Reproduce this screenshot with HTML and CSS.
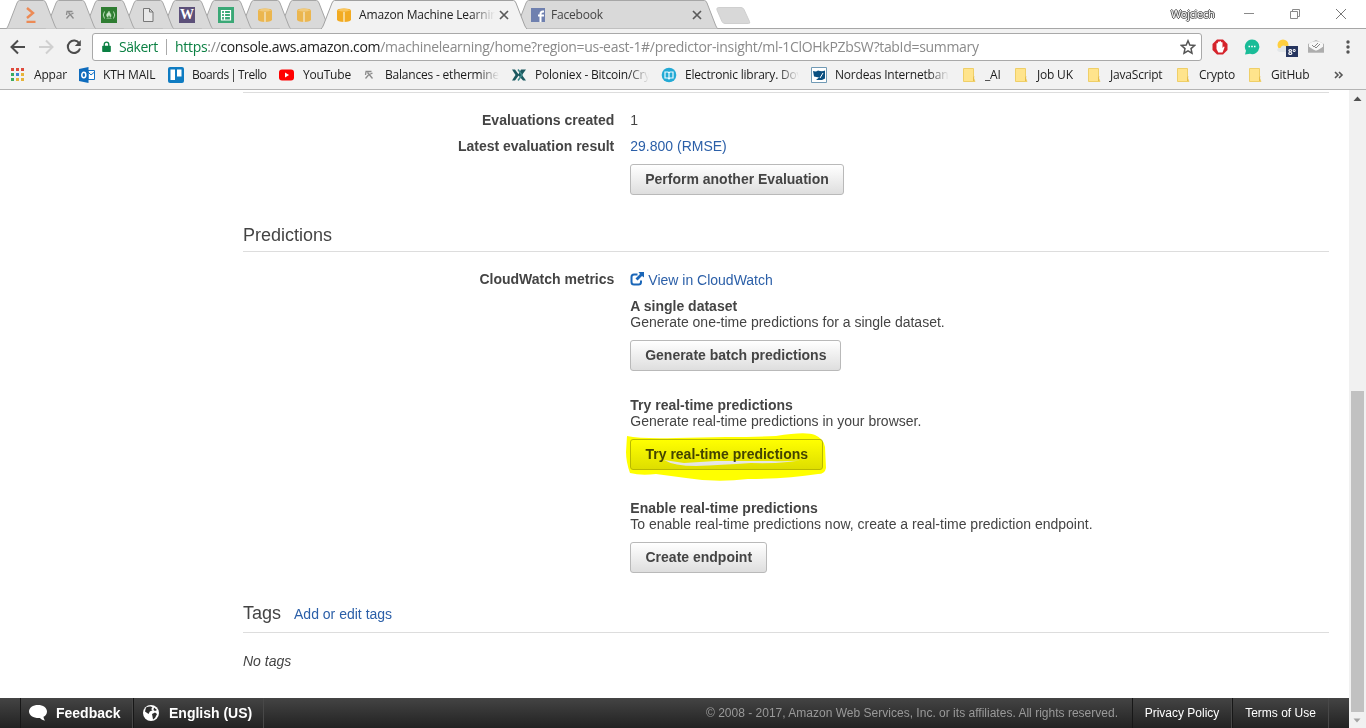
FILE: index.html
```html
<!DOCTYPE html>
<html lang="en">
<head>
<meta charset="utf-8">
<title>Amazon Machine Learning</title>
<link rel="stylesheet" href="styles.css">
</head>
<body>
<svg width="0" height="0" class="defs">
  <defs>
    <symbol id="tab" viewBox="0 0 51 29"><path d="M.5 28.500Q1.500 27.500 2.500 25L11 3Q12 .5 13.500 .5H37.500Q39 .5 40 3L48.500 25Q49.500 27.500 50.500 28.500" fill="#d9d9d9" stroke="#a6a6a6"/></symbol>
    <symbol id="cube" viewBox="0 0 16 16"><path d="M1 3.500Q1 1.500 8 1.500T15 3.500V12.500Q15 14.500 8 15Q1 14.500 1 12.500z" fill="#f2ab22"/><path d="M1.500 3.500Q4 1.500 8 1.500T14.500 3.500Q8 5.800 1.500 3.500z" fill="#f9c55c"/><path d="M7 5h2v10H7z" fill="#f9d78f"/></symbol>
    <symbol id="pick" viewBox="0 0 16 16"><path d="M4.500 4.500h6M5 4.500l-.5 3.500M6.500 5.500l5 6M7.500 8l-3 3.500M8.500 7.500l3-1.500" fill="none" stroke="#8b8b8b" stroke-width="1.300"/></symbol>
    <symbol id="folder" viewBox="0 0 16 16"><path d="M2.500 1.500h10v9.500l1.500 3.500H2.500z" fill="#ffe48c" stroke="#efcf68"/><path d="M12.500 14v-3l.5-1.500" fill="none" stroke="#e6bd4a"/></symbol>
    <symbol id="close" viewBox="0 0 10 10"><path d="M1 1l8 8M9 1L1 9" stroke="#5a5a5a" stroke-width="1.700"/></symbol>
  </defs>
</svg>
<div class="window">
  <header class="titlebar">
    <div class="tabs">
      <div class="tab"><svg class="shape"><use href="#tab"/></svg><svg class="fav dim" viewBox="0 0 16 16"><path d="M4 1l6 5-6 5M3.500 15h9" fill="none" stroke="#f3702a" stroke-width="2.400"/></svg></div>
      <div class="tab"><svg class="shape"><use href="#tab"/></svg><svg class="fav"><use href="#pick"/></svg></div>
      <div class="tab"><svg class="shape"><use href="#tab"/></svg><svg class="fav" viewBox="0 0 16 16"><path d="M0 0h16v16H0z" fill="#2f7d32"/><path d="M3.500 4.500q-2.500 3.500 0 7M12.500 4.500q2.500 3.500 0 7" fill="none" stroke="#b9dcb9"/><path d="M5.500 11.500h5M8 4c.3 2 2.500 3 2 5-.2 1-1 1.500-1 1.500.2-1.500-.8-1.500-1-2.500-.5 1-1.200 1.500-.8 2.500-2-.8-2-3-1-4C7.200 5.500 7.800 5 8 4z" fill="#c8e4c8" stroke="#b9dcb9" stroke-width=".5"/></svg></div>
      <div class="tab"><svg class="shape"><use href="#tab"/></svg><svg class="fav" viewBox="0 0 16 16"><path d="M3.500 1.500h6l3.500 3.500v9.500H3.500zM9.500 1.500V5H13" fill="#e8e8e8" stroke="#777"/></svg></div>
      <div class="tab"><svg class="shape"><use href="#tab"/></svg><span class="fav letter-w">W</span></div>
      <div class="tab"><svg class="shape"><use href="#tab"/></svg><svg class="fav" viewBox="0 0 16 16"><path d="M0 0h16v16H0z" fill="#3aa876"/><path d="M3.500 3.500h9v9.500h-9zM3.500 6.500h9M3.500 9.500h9M6.500 3.500v9.500" fill="none" stroke="#fff" stroke-width="1.200"/></svg></div>
      <div class="tab"><svg class="shape"><use href="#tab"/></svg><svg class="fav dim"><use href="#cube"/></svg></div>
      <div class="tab"><svg class="shape"><use href="#tab"/></svg><svg class="fav dim"><use href="#cube"/></svg></div>
      <div class="tab wide active">
        <svg class="shape" viewBox="0 0 206 29"><path d="M0 29Q1.500 27.500 2.500 25L11 3Q12 .5 13.500 .5H192.500Q194 .5 195 3L203.500 25Q204.500 27.500 206 29" fill="#f2f2f2" stroke="#a0a0a0"/></svg>
        <svg class="fav"><use href="#cube"/></svg><span class="tab-title fade">Amazon Machine Learnin</span><svg class="close"><use href="#close"/></svg>
      </div>
      <div class="tab wide facebook">
        <svg class="shape" viewBox="0 0 203 29"><path d="M.5 28.500Q1.500 27.500 2.500 25L11 3Q12 .5 13.500 .5H189.500Q191 .5 192 3L200.500 25Q201.500 27.500 202.500 28.500" fill="#d9d9d9" stroke="#a6a6a6"/></svg>
        <svg class="fav" viewBox="0 0 16 16"><path d="M1 1h14v14H1z" fill="#6f80af"/><path d="M10.500 15V7Q10.500 4.500 13 4.500H14M8 8.500h6" fill="none" stroke="#fff" stroke-width="2"/></svg><span class="tab-title">Facebook</span><svg class="close"><use href="#close"/></svg>
      </div>
      <svg class="newtab" viewBox="0 0 36 18"><path d="M3 .5H25q2 0 3 2l5.500 12q1 2-1 2H9q-2 0-3-2L1 3Q0 .5 3 .5z" fill="#d8d8d8" stroke="#cfcfcf"/></svg>
    </div>
    <div class="controls">
      <span class="user">Wojciech</span>
      <svg class="ctl minimize" viewBox="0 0 12 12"><path d="M1 5.500h10" stroke="#8a8a8a"/></svg>
      <svg class="ctl restore" viewBox="0 0 12 12"><path d="M1.500 3.500h7v7h-7zM3.500 3V1.500h7v7H9" fill="none" stroke="#8a8a8a"/></svg>
      <svg class="ctl" viewBox="0 0 12 12"><path d="M1 1l10 10M11 1L1 11" stroke="#777"/></svg>
    </div>
  </header>

  <div class="toolbar">
    <svg class="nav" viewBox="0 0 16 16"><path d="M15 8H2M8 1.500L1.500 8 8 14.500" fill="none" stroke="#4c4c4c" stroke-width="2"/></svg>
    <svg class="nav" viewBox="0 0 16 16"><path d="M1 8h13M8 1.500L14.500 8 8 14.500" fill="none" stroke="#d0d0d0" stroke-width="2"/></svg>
    <svg class="nav" viewBox="0 0 16 16"><path d="M13.300 4.500A6.200 6.200 0 1 0 14 9.500" fill="none" stroke="#4c4c4c" stroke-width="2"/><path d="M14.800 1v6h-6z" fill="#4c4c4c"/></svg>
    <div class="omnibox">
      <svg class="lock" viewBox="0 0 10 13"><path d="M1 5h8q.8 0 .8.800v5.400q0 .8-.8.800H1q-.8 0-.8-.8V5.800Q.2 5 1 5z" fill="#0b8043"/><path d="M2.500 6V3.500a2.500 2.500 0 0 1 5 0V6" fill="none" stroke="#0b8043" stroke-width="1.500"/></svg>
      <span class="secure">Säkert</span>
      <span class="url"><span class="scheme">https</span>://<span class="host">console.aws.amazon.com</span>/machinelearning/home?region=us-east-1#/predictor-insight/ml-1ClOHkPZbSW?tabId=summary</span>
      <svg class="star" viewBox="0 0 16 16"><path d="M8 1.800l1.800 4.300 4.700.4-3.500 3.100 1 4.600L8 11.800l-4 2.400 1-4.600L1.500 6.500l4.700-.4z" fill="none" stroke="#555" stroke-width="1.500"/></svg>
    </div>
    <div class="extensions">
      <svg viewBox="0 0 16 16"><path d="M5 .5h6L15.500 5v6L11 15.500H5L.5 11V5z" fill="#d5232b"/><path d="M4.500 8V4.500q.7-1 1.400 0V3q.7-1 1.500 0v-.4q.8-1 1.600 0v.8q.8-.8 1.500 0V9l1.200-1.500q1.200 0 .7 1.200L10.500 13.500H6.300L4.500 10z" fill="#fff"/></svg>
      <svg viewBox="0 0 16 16"><path d="M8 .5a7.300 7.300 0 1 1-2 14.300L1 15.500l1-3.800A7.300 7.300 0 0 1 8 .5z" fill="#1abc98"/><path d="M4.500 7.500h1.500M7.200 7.500h1.600M10 7.500h1.500" stroke="#fff" stroke-width="1.300"/></svg>
      <span class="weather"><svg viewBox="0 0 16 16"><circle cx="7" cy="6" r="5.500" fill="#ffcf3f"/><path d="M3.500 13q-3-1-2-3 1-1.500 3-1 1.500-3.500 5-2 2 1 2 2.500 3 0 3 3.500z" fill="#e3e7e9"/></svg><span class="temp">8°</span></span>
      <svg viewBox="0 0 16 16"><path d="M0 5l8-4 8 4v8.500H0z" fill="#b2b2b2"/><path d="M1 4.500q7-4.500 14 0V8l-7 4-7-4z" fill="#f7f7f7"/><path d="M4 6l2 2 4-4M7 8l1 1 4-4" fill="none" stroke="#888"/><path d="M0 13.500V7l5 4q3 1.500 6 0l5-4v6.500z" fill="#adadad"/></svg>
      <svg class="menu" viewBox="0 0 16 16"><circle cx="8" cy="3" r="1.700"/><circle cx="8" cy="8" r="1.700"/><circle cx="8" cy="13" r="1.700"/></svg>
    </div>
  </div>

  <nav class="bookmarks">
    <a class="bm"><svg viewBox="0 0 16 16"><path d="M1 1h3v3H1zM6 1h3v3H6zM11 1h3v3h-3z" fill="#df4a3c"/><path d="M1 6h3v3H1z" fill="#3cab61"/><path d="M6 6h3v3H6z" fill="#4285d6"/><path d="M11 6h3v3h-3z" fill="#e7b43a"/><path d="M1 11h3v3H1z" fill="#3cab61"/><path d="M6 11h3v3H6zM11 11h3v3h-3z" fill="#e7b43a"/></svg><span>Appar</span></a>
    <a class="bm"><svg viewBox="0 0 16 16"><path d="M9 3.500h6.500v9H9zM9 5l3 3 3.500-3" fill="#fff" stroke="#1472c4"/><path d="M0 2l9.500-2v16L0 14z" fill="#0f6cbd"/><ellipse cx="4.800" cy="8" rx="2" ry="2.700" fill="none" stroke="#fff" stroke-width="1.500"/></svg><span>KTH MAIL</span></a>
    <a class="bm trello"><svg viewBox="0 0 16 16"><rect width="16" height="16" rx="2" fill="#0f7cc2"/><path d="M2.500 2.500h4.500v10.500H2.500zM9 2.500h4.500v7H9z" fill="#fff"/></svg><span>Boards | Trello</span></a>
    <a class="bm"><svg viewBox="0 0 16 16"><rect x="0" y="2.500" width="15" height="11" rx="3" fill="#f00"/><path d="M6 5.500v5L10 8z" fill="#fff"/></svg><span>YouTube</span></a>
    <a class="bm"><svg><use href="#pick"/></svg><span class="fade">Balances - ethermine</span></a>
    <a class="bm"><svg viewBox="0 0 16 16"><path d="M1 2.500h3L8 8l-4 5.500H1L4.500 8zM10 2.500h5L11 8l4 5.500h-3L7 8z" fill="#1c5960"/><path d="M7 2.500L11 8l-4 5.500" fill="none" stroke="#3f898b" stroke-width="1.500"/></svg><span class="fade">Poloniex - Bitcoin/Cry</span></a>
    <a class="bm"><svg viewBox="0 0 16 16"><circle cx="8" cy="8" r="7.300" fill="#23aad5"/><path d="M4 5h3l1 1 1-1h3v6H9l-1 1-1-1H4zM8 6v5" fill="none" stroke="#eefaff" stroke-width="1.200"/></svg><span class="fade">Electronic library. Dov</span></a>
    <a class="bm"><svg viewBox="0 0 16 16"><path d="M.5.5h15v15H.5z" fill="#fff" stroke="#719ab5"/><path d="M2 4q3 1 5-.5 4 1.500 7 0v8l-3 1.500H5l3-2.500-5-1z" fill="#0a4f80"/><path d="M9 11l3-5" stroke="#fff"/></svg><span class="fade">Nordeas Internetbank</span></a>
    <a class="bm"><svg><use href="#folder"/></svg><span>_AI</span></a>
    <a class="bm"><svg><use href="#folder"/></svg><span>Job UK</span></a>
    <a class="bm"><svg><use href="#folder"/></svg><span>JavaScript</span></a>
    <a class="bm"><svg><use href="#folder"/></svg><span>Crypto</span></a>
    <a class="bm"><svg><use href="#folder"/></svg><span>GitHub</span></a>
    <svg class="more" viewBox="0 0 10 8"><path d="M1 1l3 3-3 3M5 1l3 3-3 3" fill="none" stroke="#555" stroke-width="1.600"/></svg>
  </nav>

  <div class="viewport">
    <div class="page">
      <main class="content">
        <section class="evaluations">
          <div class="row"><div class="label">Evaluations created</div><div class="value">1</div></div>
          <div class="row"><div class="label">Latest evaluation result</div><div class="value"><a class="link">29.800 (RMSE)</a></div></div>
          <div class="row"><div class="value solo"><button class="btn perform">Perform another Evaluation</button></div></div>
        </section>
        <h2 class="heading">Predictions</h2>
        <section class="predictions">
          <div class="row">
            <div class="label">CloudWatch metrics</div>
            <div class="value">
              <a class="link cloud"><svg viewBox="0 0 14 14"><path d="M7.500 2.500H4Q1.500 2.500 1.500 5v5q0 2.500 2.500 2.500H8.500q2.500 0 2.500-2.500V8.500" fill="none" stroke="#1a66b8" stroke-width="2"/><path d="M8.500 0H14v5.500l-2-1.500-4.500 4.500-2-2L10 2z" fill="#1a66b8"/></svg>View in CloudWatch</a>
              <div class="action">
                <strong>A single dataset</strong><p>Generate one-time predictions for a single dataset.</p>
                <button class="btn batch">Generate batch predictions</button>
              </div>
              <div class="action second">
                <strong>Try real-time predictions</strong><p>Generate real-time predictions in your browser.</p>
                <div class="marked"><button class="btn">Try real-time predictions</button>
                  <svg class="marker" viewBox="0 0 202 50"><path fill-rule="evenodd" d="M1 4Q15 7 50 6L100 5Q130 5 150 4Q180-1 189 3Q198 7 199 15L200 36Q199 42 192 42Q160 47 122 47Q90 51 60 46L30 42Q15 44 4 41Q0 30 0 20zM38 28L58 31 90 29 145 29Q170 30 182 27Q160 32 125 31Q95 33 70 34Q48 34 38 28z" fill="#ff0"/></svg>
                </div>
              </div>
              <div class="action third">
                <strong>Enable real-time predictions</strong><p>To enable real-time predictions now, create a real-time prediction endpoint.</p>
                <button class="btn endpoint">Create endpoint</button>
              </div>
            </div>
          </div>
        </section>
        <div class="tags-head"><h2>Tags</h2><a class="link">Add or edit tags</a></div>
        <p class="no-tags">No tags</p>
      </main>
      <footer class="footer">
        <a class="foot feedback"><svg viewBox="0 0 18 16"><path d="M9 0c5 0 9 2.700 9 6.500 0 2.600-1.500 4.300-3.500 5.300.2 1.700.7 2.800 1.600 3.700-2 0-4-1-5.100-2.500C5 13.500 0 10.500 0 6.500 0 2.700 4 0 9 0z" fill="#fff"/></svg>Feedback</a>
        <a class="foot language"><svg viewBox="0 0 16 16"><circle cx="8" cy="8" r="8" fill="#fff"/><path d="M3 2.500q3-1.500 5-1l1.500 1.200L8 4l1.500 1.200-2.700 1.300L5.500 9 2 6.500zM11 2.500l3 2.500-2 1-1.500-1zM9 9l3-1.500L14 9l-2 4-2 1.500-.5-3z" fill="#2d2d2d"/></svg>English (US)</a>
        <span class="copyright">© 2008 - 2017, Amazon Web Services, Inc. or its affiliates. All rights reserved.</span>
        <a class="foot small privacy">Privacy Policy</a><a class="foot small terms">Terms of Use</a>
      </footer>
    </div>
    <div class="scrollbar">
      <svg viewBox="0 0 16 16"><path d="M4.500 11h8l-4-4.500z" fill="#505050"/></svg>
      <div class="thumb"></div>
      <svg viewBox="0 0 16 16"><path d="M4.500 6.500h7L8 10.500z" fill="#a3a3a3"/></svg>
    </div>
  </div>
</div>
</body>
</html>
```
FILE: styles.css
```css
* { box-sizing: border-box; }
body { margin: 0; background: #fff; font: 14px/16px "Liberation Sans", Arial, sans-serif; color: #444; overflow: hidden; }
svg { display: block; flex: none; }
.defs { position: absolute; }
.window { width: 1366px; height: 728px; display: flex; flex-direction: column; overflow: hidden; }
h2, p { margin: 0; font-weight: normal; }

/* Title bar and tabs */
.titlebar { height: 29px; flex: none; display: flex; justify-content: space-between; background: linear-gradient(#a6a6a6, #a6a6a6) 0 28px / 100% 1px no-repeat; font-family: "Open Sans", "Noto Sans", sans-serif; }
.tabs { display: flex; padding-left: 6px; }
.tab { position: relative; width: 51px; height: 29px; margin-right: -12px; display: flex; justify-content: center; padding: 7px 1px 0 0; }
.tab:nth-child(1) { z-index: 8; }
.tab:nth-child(2) { z-index: 7; }
.tab:nth-child(3) { z-index: 6; }
.tab:nth-child(4) { z-index: 5; }
.tab:nth-child(5) { z-index: 4; }
.tab:nth-child(6) { z-index: 3; }
.tab:nth-child(7) { z-index: 2; }
.tab:nth-child(8) { z-index: 1; }
.shape { position: absolute; left: 0; top: 0; width: 100%; height: 29px; }
.fav { position: relative; width: 16px; height: 16px; }
.dim { opacity: .75; }
.letter-w { background: #5c5079; color: #fff; font: bold 14px/16px "Liberation Serif", serif; text-align: center; }
.wide { justify-content: flex-start; padding-left: 15px; }
.wide.active { z-index: 9; width: 206px; margin-left: 3px; }
.wide.facebook { width: 203px; margin-right: 0; }
.tab-title { position: relative; width: 136px; margin-left: 7px; font-size: 12px; letter-spacing: -.15px; white-space: nowrap; color: #222; }
.facebook .tab-title { width: 137px; margin-left: 5px; letter-spacing: -.2px; color: #444; }
.fade { -webkit-mask-image: linear-gradient(90deg, #000 82%, transparent); mask-image: linear-gradient(90deg, #000 82%, transparent); }
.close { position: relative; width: 10px; height: 10px; margin: 3px 0 0 4px; }
.newtab { width: 36px; height: 18px; margin: 7px 0 0 -2px; }
.controls { display: flex; padding: 6px 19px 0 0; }
.user { width: 45px; margin-right: 27px; font-size: 11px; letter-spacing: -.3px; color: #fff; text-shadow: -1px 0 #555, 1px 0 #555, 0 -1px #555, 0 1px #555; }
.ctl { width: 12px; height: 12px; margin: 2px 0 0; }
.minimize, .restore { margin-right: 34px; }

/* Address row */
.toolbar { height: 34px; flex: none; background: #f2f2f2; display: flex; align-items: flex-start; padding: 4px 0 0 10px; font-family: "Open Sans", "Noto Sans", sans-serif; }
.nav { width: 16px; height: 16px; margin: 6px 12px 0 0; }
.nav:nth-child(3) { margin-right: 10px; }
.omnibox { width: 1110px; height: 28px; border: 1px solid #a9a9a9; border-radius: 3px; background: #fff; display: flex; align-items: center; padding: 0 5px 0 9px; }
.lock { width: 9px; height: 12px; margin-right: 8px; }
.secure { width: 48px; border-right: 1px solid #aaa; color: #0b8043; font-size: 14px; line-height: 16px; letter-spacing: -.45px; }
.url { flex: 1; margin-left: 8px; font-size: 14px; white-space: nowrap; color: #8a8a8a; letter-spacing: -.31px; }
.scheme { color: #0b8043; }
.host { color: #222; }
.star { width: 16px; height: 16px; }
.extensions { display: flex; gap: 16px; padding: 6px 0 0 10px; }
.extensions svg { width: 16px; height: 16px; }
.weather { position: relative; }
.temp { position: absolute; left: 10px; top: 7px; width: 12px; height: 11px; background: #26355f; color: #fff; font: bold 8px/11px "Open Sans", sans-serif; text-align: center; }
.extensions .menu { fill: #555; }

/* Bookmarks */
.bookmarks { height: 27px; flex: none; background: #f2f2f2; border-bottom: 1px solid #b4b4b4; padding: 4px 0 0 10px; display: grid; grid-template-columns: 69px 89px 111px 82px 150px 150px 150px 150px 52px 73px 89px 72px 87px 12px; font: 12px/16px "Open Sans", "Noto Sans", sans-serif; color: #1c1c1c; }
.bm { display: flex; gap: 8px; white-space: nowrap; }
.bm svg { width: 16px; height: 16px; }
.bm span { letter-spacing: -.2px; }
.bm.trello span { letter-spacing: -.5px; word-spacing: -1px; }
.bm .fade { width: 114px; }
.more { width: 10px; height: 8px; margin-top: 4px; }

/* Page */
.viewport { flex: 1; display: flex; min-height: 0; }
.page { width: 1349px; display: flex; flex-direction: column; }
.content { flex: 1; padding: 2px 20px 0 243px; }
.evaluations { border-top: 1px solid #ddd; height: 134px; padding-top: 19px; }
.row { display: flex; }
.evaluations .row { height: 26px; }
.label { width: 371.3px; text-align: right; font-weight: bold; }
.value { margin-left: 16px; }
.solo { margin-left: 387px; }
.link { color: #2b5fa8; }
.btn { display: block; height: 31px; padding: 0 0 2px; border: 1px solid #b9b9b9; border-radius: 3px; background: linear-gradient(#fff, #dedede); font: bold 14px/16px "Liberation Sans", Arial, sans-serif; color: #444; white-space: nowrap; }
.perform { width: 214px; }
.heading { height: 26px; border-bottom: 1px solid #ddd; font-size: 18px; line-height: 18px; }
.predictions { height: 352px; padding-top: 19px; }
.cloud { display: flex; gap: 4px; padding-top: 1px; height: 27px; }
.cloud svg { width: 14px; height: 14px; }
.action strong { display: block; }
.action .btn { margin-top: 10px; }
.batch { width: 211px; }
.second { margin-top: 26px; }
.marked { position: relative; margin-top: 10px; }
.marked .btn { width: 193px; margin: 0; }
.marker { position: absolute; left: -4px; top: -7px; width: 202px; height: 50px; mix-blend-mode: multiply; }
.third { margin-top: 30px; }
.endpoint { width: 137px; }
.tags-head { display: flex; gap: 13px; height: 29px; border-bottom: 1px solid #ddd; }
.tags-head h2 { font-size: 18px; line-height: 18px; }
.tags-head .link { padding-top: 2px; }
.no-tags { padding-top: 20px; font-style: italic; }

/* Footer */
.footer { height: 30px; flex: none; display: flex; padding-left: 20px; background: linear-gradient(#444, #222); color: #999; font-size: 12px; line-height: 30px; }
.foot { display: flex; align-items: center; border-left: 1px solid #171717; border-right: 1px solid #484848; color: #fff; font-size: 14px; font-weight: bold; white-space: nowrap; }
.feedback { width: 113px; padding-left: 8px; gap: 9px; }
.feedback svg { width: 18px; height: 16px; }
.language { width: 131px; padding-left: 9px; gap: 10px; }
.language svg { width: 16px; height: 16px; }
.copyright { flex: 1; text-align: right; padding-right: 14px; letter-spacing: .01px; }
.small { font-size: 12px; font-weight: normal; justify-content: center; }
.privacy { width: 100px; }
.terms { width: 97px; margin-right: 20px; }

/* Scrollbar */
.scrollbar { width: 17px; background: #f1f1f1; display: flex; flex-direction: column; }
.scrollbar svg { width: 16px; height: 16px; }
.thumb { margin: 285px 2px 0 2px; flex: 1; background: #c1c1c1; }
```
